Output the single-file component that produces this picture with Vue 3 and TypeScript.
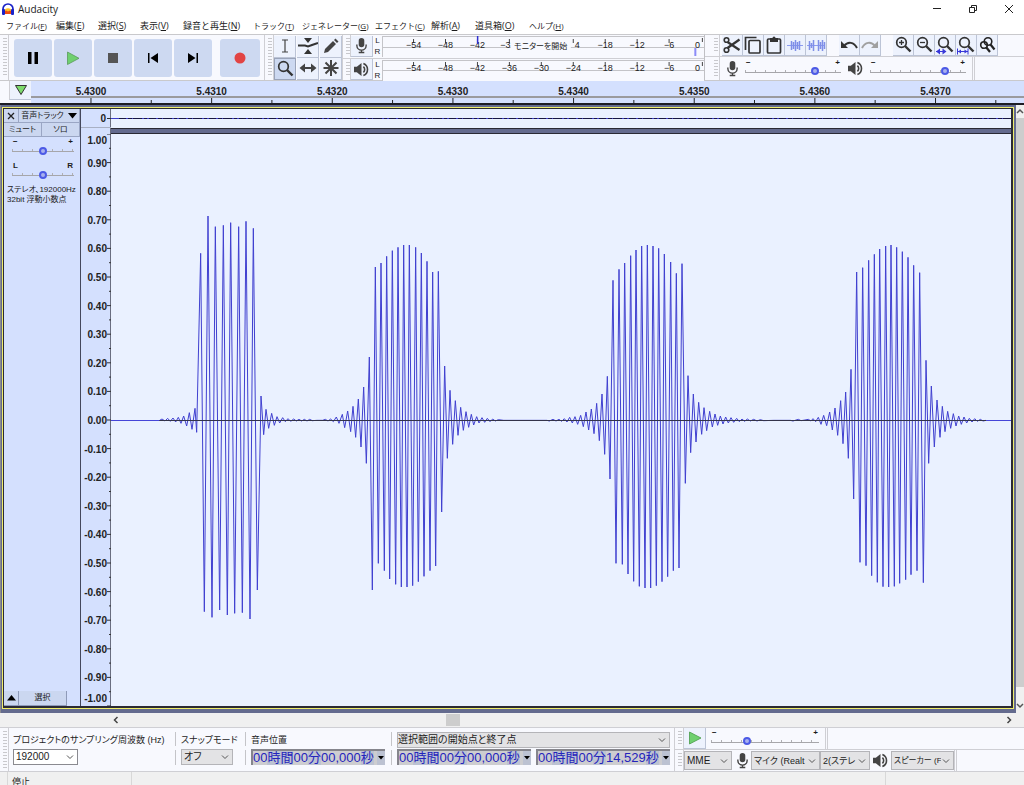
<script setup lang="ts">
import { ref } from 'vue'

interface MenuItem { label: string; key: string; kana?: boolean }
interface Burst { x: number; mid: number; peaks: number[] }

const menus: MenuItem[] = [
  { label: 'ファイル', key: 'F', kana: true },
  { label: '編集', key: 'E' },
  { label: '選択', key: 'S' },
  { label: '表示', key: 'V' },
  { label: '録音と再生', key: 'N' },
  { label: 'トラック', key: 'T', kana: true },
  { label: 'ジェネレーター', key: 'G', kana: true },
  { label: 'エフェクト', key: 'C', kana: true },
  { label: '解析', key: 'A' },
  { label: '道具箱', key: 'O' },
  { label: 'ヘルプ', key: 'H', kana: true },
]

const meterMarks = [-54, -48, -42, -36, -30, -24, -18, -12, -6].map((db, i) => ({
  text: '−' + Math.abs(db),
  at: 9.8 + i * 9.92,
}))
const recMarks = meterMarks.map((m, i) => ({
  at: m.at,
  text: i === 3 ? '−3' : i === 4 ? '' : i === 5 ? '4' : m.text,
  shift: i === 3 ? -4 : i === 5 ? 4 : 0,
}))

const timeMarks = Array.from({ length: 8 }, (_, i) => ({
  text: (5.43 + i * 0.001).toFixed(4),
  at: 6.04 + i * 12.15,
}))

const ampMarks = Array.from({ length: 21 }, (_, i) => {
  const v = (10 - i) / 10
  return { text: v.toFixed(2), at: i * 5, dy: i === 0 ? 10 : i === 20 ? -4 : 4 }
})

/* Turning points of each burst, as x, y pairs in thirds of a pixel. */
const bursts: Burst[] = [
  {
    x: 117, mid: 661,
    peaks: [28, 661, 35, 657, 44, 663, 52, 655, 60, 664, 68, 654, 76, 666, 84, 652, 92, 670, 100, 648, 109, 678, 117, 638, 125, 688, 134, 625, 139, 697, 151, 160, 162, 1235, 173, 48, 185, 1252, 195, 80, 208, 1230, 219, 76, 231, 1245, 241, 68, 253, 1240, 265, 80, 276, 1238, 287, 64, 299, 1257, 309, 85, 321, 1170, 332, 588, 340, 704, 347, 628, 355, 685, 364, 640, 372, 676, 380, 650, 388, 669, 397, 653, 405, 665, 413, 656, 421, 664, 430, 657, 438, 663, 446, 658, 454, 663, 462, 658, 470, 663, 478, 658, 486, 662, 500, 661, 517, 661, 525, 658, 533, 663, 541, 657, 549, 665, 558, 651, 566, 670],
  },
  {
    x: 627, mid: 571,
    peaks: [66, 553, 73, 593, 82, 543, 91, 605, 98, 529, 106, 622, 114, 507, 122, 651, 130, 471, 138, 700, 147, 381, 156, 1080, 165, 111, 174, 1000, 182, 99, 192, 1022, 199, 79, 208, 1047, 216, 62, 226, 1063, 233, 52, 243, 1071, 250, 45, 260, 1071, 267, 45, 277, 1067, 286, 52, 294, 1055, 303, 69, 311, 1039, 320, 94, 329, 1022, 337, 126, 346, 1008, 354, 124, 364, 846, 373, 408, 381, 685, 389, 481, 397, 643, 405, 512, 413, 616, 421, 532, 429, 601, 437, 545, 445, 592, 453, 553, 460, 585, 469, 560, 476, 579, 485, 563, 493, 577, 501, 565, 509, 575, 517, 567, 525, 573, 534, 569, 550, 571],
  },
  {
    x: 1287, mid: 571,
    peaks: [20, 571, 27, 573, 38, 568, 47, 573, 56, 568, 64, 574, 72, 566, 80, 576, 88, 562, 96, 579, 104, 560, 112, 583, 121, 556, 129, 590, 137, 546, 145, 600, 153, 537, 161, 611, 169, 520, 177, 632, 185, 492, 193, 673, 201, 439, 209, 747, 218, 151, 227, 1000, 236, 118, 246, 1003, 253, 99, 263, 1032, 271, 77, 280, 1054, 287, 60, 297, 1069, 304, 48, 314, 1074, 321, 45, 331, 1074, 338, 48, 348, 1067, 355, 55, 365, 1055, 372, 72, 382, 1040, 391, 96, 399, 1022, 408, 130, 416, 1014, 425, 101, 435, 760, 443, 437, 451, 668, 459, 492, 467, 636, 475, 517, 484, 613, 491, 533, 499, 602, 508, 544, 516, 591, 524, 552, 532, 586, 540, 558, 548, 582, 556, 561, 564, 579, 572, 563, 580, 577, 589, 565, 597, 575, 605, 567, 613, 574, 621, 567, 630, 573, 640, 568, 650, 573, 660, 569, 670, 572, 700, 571],
  },
  {
    x: 2037, mid: 571,
    peaks: [0, 571, 8, 573, 24, 568, 32, 572, 44, 570, 54, 568, 62, 573, 68, 566, 76, 575, 84, 562, 92, 583, 100, 556, 109, 587, 118, 546, 126, 600, 134, 534, 142, 616, 151, 512, 158, 641, 166, 486, 174, 685, 182, 418, 190, 807, 199, 126, 209, 997, 217, 113, 227, 1007, 235, 91, 244, 1037, 252, 73, 261, 1057, 268, 57, 278, 1070, 286, 48, 295, 1071, 302, 45, 312, 1069, 319, 52, 328, 1060, 336, 65, 346, 1049, 353, 82, 362, 1034, 370, 106, 380, 1022, 388, 128, 399, 1058, 407, 391, 415, 700, 423, 468, 432, 651, 440, 510, 449, 622, 456, 529, 464, 605, 472, 544, 481, 595, 489, 551, 497, 588, 505, 558, 513, 583, 521, 561, 529, 579, 537, 565, 545, 576, 553, 566, 561, 574, 570, 568, 578, 573, 587, 571],
  },
]

const wave = bursts
  .flatMap((b) => {
    const out: string[] = []
    for (let i = 0; i < b.peaks.length; i += 2) {
      out.push(`${b.peaks[i] + b.x + 1},${b.peaks[i + 1] - b.mid + 859}`)
    }
    return out
  })
  .join(' ')

const timeParts = (sec: string) => [
  { t: '00', unit: false }, { t: '時間', unit: true },
  { t: '00', unit: false }, { t: '分', unit: true },
  { t: sec, unit: false }, { t: '秒', unit: true },
]

const recLevel = ref(75)
const playLevel = ref(81)
const gain = ref(50)
const pan = ref(50)
const speed = ref(32)
</script>

<template>
  <div class="app">
    <svg class="defs" aria-hidden="true">
      <symbol id="mic" viewBox="0 0 14 18">
        <rect x="4" y="1" width="6" height="10" rx="3" fill="#444" />
        <path d="M2 8v1a5 5 0 0 0 10 0V8M7 14v3M4 16.500h6" fill="none" stroke="#444" stroke-width="1.500" />
      </symbol>
      <symbol id="speaker" viewBox="0 0 18 16">
        <path d="M1 5h3l5-4v14l-5-4H1z" fill="#444" />
        <path d="M11 5a4 4 0 0 1 0 6M11 1.500a7 7 0 0 1 0 13" fill="none" stroke="#444" stroke-width="1.700" />
      </symbol>
      <symbol id="chev" viewBox="0 0 8 8">
        <path d="M1 2.500l3 3 3-3" fill="none" stroke="#555" />
      </symbol>
      <symbol id="lens" viewBox="0 0 20 20">
        <circle cx="8.500" cy="7.500" r="4.800" fill="none" stroke="#333" stroke-width="1.700" />
        <path d="M12 11l5.500 5.500" stroke="#333" stroke-width="2.400" />
      </symbol>
    </svg>

    <header class="title">
      <svg width="14" height="14" viewBox="0 0 14 14">
        <path d="M3.500 8.500C4 5.500 10 5.500 10.500 8.500V12H3.500z" fill="#ffc020" />
        <path d="M3.500 9.500l1.500-1 2 1 2-1 1.500 1V12h-7z" fill="#f04a10" />
        <path d="M2 9V7a5 5 0 0 1 10 0v2" fill="none" stroke="#1a22c8" stroke-width="1.700" />
        <rect x="1" y="7" width="3" height="6" rx="1" fill="#1a22c8" />
        <rect x="10" y="7" width="3" height="6" rx="1" fill="#1a22c8" />
      </svg>
      <h1>Audacity</h1>
      <div class="winbtns">
        <button aria-label="最小化"><svg width="10" height="10" viewBox="0 0 10 10"><path d="M1 4.500h8" stroke="#222" /></svg></button>
        <button aria-label="元に戻す"><svg width="10" height="10" viewBox="0 0 10 10"><path d="M1.500 3.500h5v5h-5zM3.500 3.500v-2h5v5h-2" fill="none" stroke="#222" /></svg></button>
        <button aria-label="閉じる"><svg width="10" height="10" viewBox="0 0 10 10"><path d="M1 1l8 8M9 1l-8 8" stroke="#222" /></svg></button>
      </div>
    </header>

    <nav class="menu">
      <button v-for="m in menus" :key="m.key" :class="{ kana: m.kana }">{{ m.label }}(<u>{{ m.key }}</u>)</button>
    </nav>

    <section class="tools">
      <div class="transport">
        <i class="grip"></i>
        <div class="tbtns">
          <button aria-label="一時停止"><svg viewBox="0 0 38 38"><path d="M14 13h3.500v12H14zM20.500 13H24v12h-3.500z" fill="#000" /></svg></button>
          <button aria-label="再生"><svg viewBox="0 0 38 38"><path d="M13.500 13v12.500L25 19.300z" fill="#6fd06f" stroke="#5a9a5a" stroke-width=".8" /></svg></button>
          <button aria-label="停止"><svg viewBox="0 0 38 38"><path d="M14 14h10v10H14z" fill="#555" /></svg></button>
          <button aria-label="先頭へ"><svg viewBox="0 0 38 38"><path d="M14 14h1.500v10H14zM24 14v10l-7.500-5z" fill="#000" /></svg></button>
          <button aria-label="末尾へ"><svg viewBox="0 0 38 38"><path d="M22.500 14H24v10h-1.500zM14 14v10l7.500-5z" fill="#000" /></svg></button>
          <button class="rec" aria-label="録音"><svg viewBox="0 0 38 38"><circle cx="19" cy="19" r="5.500" fill="#e24444" /></svg></button>
        </div>
      </div>

      <div class="toolpick">
        <i class="grip"></i>
        <div class="pick">
          <button aria-label="選択ツール"><svg viewBox="0 0 20 20"><path d="M7 4h2.500l.5.500.5-.500H13M7 16h2.500l.5-.500.5.500H13M10 4.500v11" fill="none" stroke="#444" stroke-width="1.200" /></svg></button>
          <button aria-label="エンベロープ"><svg viewBox="0 0 20 20"><path d="M0 9.500h7l3 1 4-1.500 6-2" fill="none" stroke="#333" stroke-width="2" /><path d="M6 2h8l-4 5zM6 18h8l-4-5z" fill="#333" /></svg></button>
          <button aria-label="ドロー"><svg viewBox="0 0 20 20"><path d="M3 17l1-4 8-8 3 3-8 8zM13 4l1.500-1.500 3 3L16 7z" fill="#444" /></svg></button>
          <button class="on" aria-label="ズーム"><svg viewBox="0 0 20 20"><use href="#lens" /></svg></button>
          <button aria-label="タイムシフト"><svg viewBox="0 0 20 20"><path d="M4 10h12" stroke="#444" stroke-width="2" /><path d="M7 5.500L1.500 10 7 14.500zM13 5.500l5.500 4.500-5.500 4.500z" fill="#444" /></svg></button>
          <button aria-label="マルチツール"><svg viewBox="0 0 20 20"><path d="M10 2v16M2.500 10h15M4.500 4.500l11 11M15.500 4.500l-11 11" stroke="#444" stroke-width="2" /></svg></button>
        </div>
      </div>

      <div class="meters">
        <div class="meter">
          <i class="grip"></i>
          <button class="sq" aria-label="録音メーター"><svg class="mic"><use href="#mic" /></svg></button>
          <span class="lr"><b>L</b><b>R</b></span>
          <svg class="scale" height="22">
            <rect width="100%" height="22" fill="#f8f9fe" />
            <path d="M0 1.500h2000M0 12.500h2000M.5 1v21" stroke="#c4c4c8" fill="none" />
            <template v-for="m in recMarks" :key="m.at">
              <line :x1="m.at + '%'" :x2="m.at + '%'" y1="4" y2="8" stroke="#444" />
              <text :x="m.at + '%'" :dx="m.shift" y="13">{{ m.text }}</text>
            </template>
            <line x1="29.700%" x2="29.700%" y1="1" y2="9" stroke="#3030d0" stroke-width="1.500" />
            <rect x="40%" y="4" width="60" height="14" fill="#f8f9fe" />
            <text class="jp" x="49.300%" y="14">モニターを開始</text>
            <text x="98%" y="13">0</text>
            <line x1="99.500%" x2="99.500%" y1="3" y2="7" stroke="#444" />
            <rect x="97%" y="13" width="2" height="8" fill="#8c8cf8" />
          </svg>
        </div>
        <div class="meter">
          <i class="grip"></i>
          <button class="sq" aria-label="再生メーター"><svg class="spk"><use href="#speaker" /></svg></button>
          <span class="lr"><b>L</b><b>R</b></span>
          <svg class="scale" height="22">
            <rect width="100%" height="22" fill="#f8f9fe" />
            <path d="M0 1.500h2000M0 11.500h2000M.5 1v21" stroke="#c4c4c8" fill="none" />
            <template v-for="m in meterMarks" :key="m.at">
              <line :x1="m.at + '%'" :x2="m.at + '%'" y1="3" y2="7" stroke="#444" />
              <text :x="m.at + '%'" y="12">{{ m.text }}</text>
            </template>
            <text x="98%" y="12">0</text>
            <line x1="99.500%" x2="99.500%" y1="3" y2="7" stroke="#444" />
          </svg>
        </div>
      </div>

      <div class="right">
        <div class="editbar">
          <i class="grip"></i>
          <div class="group">
            <button aria-label="切り取り"><svg viewBox="0 0 20 20"><path d="M5.500 7l12 8M5.500 13l12-8.500" stroke="#333" stroke-width="2.200" /><circle cx="4.500" cy="5" r="2.300" fill="none" stroke="#333" stroke-width="1.600" /><circle cx="4.500" cy="15" r="2.300" fill="none" stroke="#333" stroke-width="1.600" /></svg></button>
            <button aria-label="コピー"><svg viewBox="0 0 20 20"><path d="M2.500 15V2.500h11" fill="none" stroke="#333" stroke-width="1.700" /><rect x="6" y="5.500" width="11" height="12.500" rx="1" fill="none" stroke="#333" stroke-width="1.700" /></svg></button>
            <button aria-label="貼り付け"><svg viewBox="0 0 20 20"><rect x="3.500" y="4" width="13" height="14" rx="1" fill="none" stroke="#333" stroke-width="1.700" /><path d="M6 3h2.500a1.500 1.500 0 0 1 3 0H14v4H6z" fill="#333" /></svg></button>
            <button aria-label="トリム"><svg viewBox="0 0 20 20"><path d="M2 10.500h16" stroke="#8c9cf0" /><path d="M6.500 6v9M8.500 7v7M10.500 5v11M12.500 7v7M14.500 6v9" stroke="#7f8fe8" stroke-width="1.500" /></svg></button>
            <button aria-label="無音化"><svg viewBox="0 0 20 20"><path d="M1 10.500h18" stroke="#8c9cf0" /><path d="M3.500 6v9M5.500 8v5M7.500 5v11M12.500 5v11M14.500 7v7M16.500 5v11M18.500 7v7" stroke="#7f8fe8" stroke-width="1.500" /></svg></button>
          </div>
          <div class="group">
            <button aria-label="元に戻す"><svg viewBox="0 0 20 20"><path d="M2 6v7h7z" fill="#333" /><path d="M5 11c4-5 10-4 13 2" fill="none" stroke="#333" stroke-width="2" /></svg></button>
            <button aria-label="やり直し"><svg viewBox="0 0 20 20"><path d="M18 6v7h-7z" fill="#a0a0a0" /><path d="M15 11c-4-5-10-4-13 2" fill="none" stroke="#a0a0a0" stroke-width="2" /></svg></button>
          </div>
          <div class="group">
            <button aria-label="拡大"><svg viewBox="0 0 20 20"><use href="#lens" /><path d="M6 7.500h5M8.500 5v5" stroke="#333" stroke-width="1.300" /></svg></button>
            <button aria-label="縮小"><svg viewBox="0 0 20 20"><use href="#lens" /><path d="M6 7.500h5" stroke="#333" stroke-width="1.300" /></svg></button>
            <button aria-label="選択範囲に合わせる"><svg viewBox="0 0 20 20"><use href="#lens" /><path d="M1 16.500h10" stroke="#3838d8" /><path d="M1 16.500l4-3v6zM11.500 16.500l-4-3v6z" fill="#3838d8" /></svg></button>
            <button aria-label="全体に合わせる"><svg viewBox="0 0 20 20"><use href="#lens" /><path d="M1.500 13.500v6M12 13.500v6M2 16.500h10" stroke="#3838d8" /><path d="M2 16.500l3-2v4zM11.500 16.500l-3-2v4z" fill="#3838d8" /></svg></button>
            <button aria-label="ズーム切り替え"><svg viewBox="0 0 20 20"><circle cx="7" cy="10" r="3.300" fill="none" stroke="#222" stroke-width="1.600" /><circle cx="11" cy="6.500" r="3.800" fill="none" stroke="#222" stroke-width="1.600" /><path d="M9 12l4 5M13.500 9.500l4 5" stroke="#222" stroke-width="2.200" /></svg></button>
          </div>
        </div>
        <div class="mixer">
          <i class="grip"></i>
          <svg class="mic"><use href="#mic" /></svg>
          <label class="slider w96"><span><b>−</b><b>+</b></span><input v-model="recLevel" type="range" aria-label="録音音量" /></label>
          <svg class="spk"><use href="#speaker" /></svg>
          <label class="slider w96"><span><b>−</b><b>+</b></span><input v-model="playLevel" type="range" aria-label="再生音量" /></label>
          <i class="endcap"></i>
        </div>
      </div>
    </section>

    <section class="timeline">
      <button class="pin" aria-label="ヘッドを固定"><svg width="14" height="12" viewBox="0 0 14 12"><path d="M1.500 1.500h11L7 10.500z" fill="#7ddb6c" stroke="#333" /></svg></button>
      <svg class="ruler">
        <rect y="15" width="100%" height="2" fill="#9a9a9e" />
        <template v-for="t in timeMarks" :key="t.at">
          <text :x="t.at + '%'" y="14">{{ t.text }}</text>
          <line :x1="t.at + '%'" :x2="t.at + '%'" y1="17" y2="22" stroke="#222" />
          <line :x1="t.at + 6.07 + '%'" :x2="t.at + 6.07 + '%'" y1="19" y2="22" stroke="#222" />
        </template>
      </svg>
    </section>

    <main class="stage">
      <div class="frame">
        <div class="track">
          <aside class="panel">
            <div class="prow">
              <button class="x" aria-label="トラックを閉じる"><svg width="8" height="8" viewBox="0 0 8 8"><path d="M1 1l6 6M7 1L1 7" stroke="#222" stroke-width="1.300" /></svg></button>
              <button class="name">音声トラック<svg width="9" height="6" viewBox="0 0 9 6"><path d="M0 0h9L4.500 5.500z" fill="#000" /></svg></button>
            </div>
            <div class="prow half"><button>ミュート</button><button>ソロ</button></div>
            <label class="slider"><span><b>−</b><b>+</b></span><input v-model="gain" type="range" aria-label="ゲイン" /></label>
            <label class="slider"><span><b>L</b><b>R</b></span><input v-model="pan" type="range" aria-label="パン" /></label>
            <p>ステレオ、192000Hz<br />32bit 浮動小数点</p>
            <div class="pfoot">
              <button aria-label="折りたたむ"><svg width="9" height="6" viewBox="0 0 9 6"><path d="M0 5.500h9L4.500 0z" fill="#000" /></svg></button>
              <button class="sel">選択</button>
            </div>
          </aside>

          <div class="vruler">
            <svg class="vtop"><text x="25" y="13">0</text><path d="M26 9.500h4" stroke="#333" /></svg>
            <svg class="vmain">
              <template v-for="a in ampMarks" :key="a.at">
                <text x="26" :y="a.at + '%'" :dy="a.dy">{{ a.text }}</text>
                <line x1="26" x2="30" :y1="a.at + '%'" :y2="a.at + '%'" stroke="#333" />
                <line x1="28" x2="30" :y1="a.at + 2.5 + '%'" :y2="a.at + 2.5 + '%'" stroke="#333" />
              </template>
            </svg>
          </div>

          <div class="waves">
            <svg class="wtop">
              <line x1="0" x2="100%" y1="9.500" y2="9.500" stroke="#3c3cc8" />
              <line x1="8" x2="100%" y1="9.500" y2="9.500" stroke="#181840" stroke-dasharray="7 2 4 1 9 2 3 2" />
            </svg>
            <div class="bar"></div>
            <svg class="wmain" viewBox="0 0 2700 1716" preserveAspectRatio="none">
              <polyline :points="wave" class="sig" />
              <line x1="0" x2="2700" y1="859.500" y2="859.500" stroke="#4646d8" class="ln" />
              <line x1="145" x2="2625" y1="859.500" y2="859.500" stroke="#33334a" class="ln" />
            </svg>
          </div>
        </div>
      </div>
      <div class="vscroll">
        <svg width="8" height="12" viewBox="0 0 8 12"><path d="M1 8l3-3 3 3" fill="none" stroke="#555" stroke-width="1.500" /></svg>
        <i></i>
        <svg width="8" height="12" viewBox="0 0 8 12"><path d="M1 3l3 3 3-3" fill="none" stroke="#555" stroke-width="1.500" /></svg>
      </div>
    </main>

    <div class="hscroll">
      <svg width="8" height="8" viewBox="0 0 8 8"><path d="M5.500 1l-3 3 3 3" fill="none" stroke="#444" stroke-width="1.500" /></svg>
      <div class="htrack"><i></i></div>
      <svg width="8" height="8" viewBox="0 0 8 8"><path d="M2.500 1l3 3-3 3" fill="none" stroke="#444" stroke-width="1.500" /></svg>
    </div>

    <section class="dock">
      <div class="selbar">
        <i class="grip"></i>
        <div class="cell rate">
          <label for="rate">プロジェクトのサンプリング周波数 (Hz)</label>
          <span class="dd white"><select id="rate"><option>192000</option></select><svg><use href="#chev" /></svg></span>
        </div>
        <i class="split"></i>
        <div class="cell snap">
          <label for="snap">スナップモード</label>
          <span class="dd"><select id="snap"><option>オフ</option></select><svg><use href="#chev" /></svg></span>
        </div>
        <i class="split"></i>
        <div class="cell pos">
          <span class="cap">音声位置</span>
          <div class="time"><span v-for="(p, i) in timeParts('00,000')" :key="i" :class="{ unit: p.unit }">{{ p.t }}</span><button aria-label="書式"><svg width="6" height="4" viewBox="0 0 6 4"><path d="M0 0h6L3 3.500z" fill="#000" /></svg></button></div>
        </div>
        <i class="split"></i>
        <div class="cell range">
          <span class="dd"><select aria-label="選択範囲の種類"><option>選択範囲の開始点と終了点</option></select><svg><use href="#chev" /></svg></span>
          <div class="pair">
            <div class="time"><span v-for="(p, i) in timeParts('00,000')" :key="i" :class="{ unit: p.unit }">{{ p.t }}</span><button aria-label="書式"><svg width="6" height="4" viewBox="0 0 6 4"><path d="M0 0h6L3 3.500z" fill="#000" /></svg></button></div>
            <div class="time"><span v-for="(p, i) in timeParts('14,529')" :key="i" :class="{ unit: p.unit }">{{ p.t }}</span><button aria-label="書式"><svg width="6" height="4" viewBox="0 0 6 4"><path d="M0 0h6L3 3.500z" fill="#000" /></svg></button></div>
          </div>
        </div>
      </div>
      <div class="devs">
        <div class="speedrow">
          <i class="grip"></i>
          <button class="sq" aria-label="指定速度で再生"><svg width="14" height="14" viewBox="0 0 14 14"><path d="M1.500 1v12L13 7z" fill="#6fd06f" stroke="#4a9a4a" stroke-width=".8" /></svg></button>
          <label class="slider w108"><span><b>−</b><b>+</b></span><input v-model="speed" type="range" aria-label="再生速度" /></label>
          <i class="endcap"></i>
        </div>
        <div class="devrow">
          <i class="grip"></i>
          <span class="dd d48"><select aria-label="オーディオホスト"><option>MME</option></select><svg><use href="#chev" /></svg></span>
          <svg class="mic"><use href="#mic" /></svg>
          <span class="dd kana d68"><select aria-label="録音デバイス"><option>マイク (Realt</option></select><svg><use href="#chev" /></svg></span>
          <span class="dd kana d50"><select aria-label="録音チャンネル"><option>2(ステレ</option></select><svg><use href="#chev" /></svg></span>
          <svg class="spk"><use href="#speaker" /></svg>
          <span class="dd kana d62"><select aria-label="再生デバイス"><option>スピーカー (F</option></select><svg><use href="#chev" /></svg></span>
          <i class="endcap"></i>
        </div>
      </div>
    </section>

    <footer class="status"><span class="s0"></span><span class="s1">停止</span><span class="s2"></span><span class="s3"></span></footer>
  </div>
</template>

<style>
html, body { margin: 0; overflow: hidden; }
</style>

<style scoped>
.app {
  height: 100vh;
  display: flex;
  flex-direction: column;
  background: #fff;
  color: #1c1c1c;
  font: 10px/12px "Liberation Sans", "Noto Sans CJK JP", sans-serif;
  font-feature-settings: "palt";
  overflow: hidden;
}
.app *, .app *::before { box-sizing: border-box; }
.defs { display: none; }
button, select {
  font: inherit;
  font-feature-settings: inherit;
  color: inherit;
  margin: 0;
  padding: 0;
  border: 0;
  background: none;
  border-radius: 0;
}
svg { display: block; flex: none; }
b { font-weight: normal; }

.title { height: 18px; flex: none; display: flex; align-items: center; gap: 3px; padding-left: 1px; }
.title h1 { margin: 0; font: 10px/14px "Open Sans", sans-serif; }
.winbtns { margin-left: auto; display: flex; gap: 14px; padding-right: 10px; }
.winbtns button { width: 22px; height: 16px; display: grid; place-items: center; }
.winbtns button:last-child { width: 10px; margin-left: 6px; }

.menu {
  height: 16px;
  flex: none;
  display: grid;
  grid-template-columns: 50px 42px 42px 43px 70px 49px 73px 56px 44px 54px auto;
  padding-left: 6px;
  font: 9px/16px "Open Sans", "Noto Sans CJK JP", sans-serif;
}
.menu button { text-align: left; white-space: nowrap; }
.menu button.kana { font-size: 8px; }

.tools {
  flex: none;
  height: 47px;
  display: flex;
  background: #f8f9fe;
  border-top: 1px solid #c9c9cc;
  border-bottom: 1px solid #c9c9cc;
}
.grip {
  flex: none;
  width: 9px;
  align-self: stretch;
  border-right: 1px solid #cfcfd4;
  background: repeating-linear-gradient(#c8c8cc 0 1px, transparent 1px 3px) 3px 3px / 4px calc(100% - 6px) no-repeat;
}
.transport, .toolpick, .meter, .editbar, .mixer { display: flex; align-items: center; }
.tbtns { display: flex; gap: 2px; padding: 0 4px 0 5px; }
.tbtns button { width: 38px; height: 38px; border-radius: 3px; background: #cdd9f1; }
.tbtns button.rec { margin-left: 6px; width: 40px; display: grid; place-items: center; }
.tbtns svg { width: 38px; height: 38px; }

.toolpick { border-left: 1px solid #cfcfd4; }
.pick { display: grid; grid-template-columns: repeat(3, 22px); column-gap: 1px; grid-auto-rows: 22px; }
.pick button, .group button, .sq {
  background: #edf2fd;
  border-right: 1px solid #bcc4d6;
  border-bottom: 1px solid #bcc4d6;
  display: grid;
  place-items: center;
}
.pick svg { width: 20px; height: 20px; }
.pick button.on { background: #cdd9f1; border: 1px solid #9aa4ba; }

.meters { flex: 1 1 0; display: grid; grid-template-rows: 23px 22px; border-left: 1px solid #cfcfd4; }
.meters .grip { width: 8px; }
.meter { height: 22px; }
.meter + .meter { border-top: 1px solid #cfcfd4; }
.sq { width: 22px; height: 21px; }
.lr { width: 9px; display: grid; grid-template-rows: 11px 11px; font-size: 8px; line-height: 11px; text-align: center; }
.scale { flex: 1; width: 0; overflow: hidden; }
.scale text { font-size: 9px; text-anchor: middle; fill: #222; }
.scale .jp { font-size: 8px; }
.mic { width: 13px; height: 17px; }
.spk { width: 17px; height: 15px; }

.right { width: 320px; flex: none; display: grid; grid-template-rows: 22px 23px; border-left: 1px solid #c0c0c4; }
.editbar, .mixer { padding-left: 6px; }
.editbar { gap: 2px; border-bottom: 1px solid #cfcfd4; }
.group { display: flex; margin-right: 10px; }
.group button { width: 21px; height: 21px; }
.group svg { width: 20px; height: 20px; }
.mixer { gap: 6px; }
.endcap { width: 3px; align-self: stretch; border: solid #cfcfd4; border-width: 0 1px; }

.slider { display: block; height: 20px; }
.slider > span { display: flex; justify-content: space-between; font-size: 8px; line-height: 8px; height: 8px; padding: 0 1px; }
.slider b { font-weight: bold; }
.slider input {
  appearance: none;
  display: block;
  width: 100%;
  height: 9px;
  margin: 0;
  background:
    linear-gradient(#a6a6aa, #a6a6aa) 0 5px / 100% 1px no-repeat,
    repeating-linear-gradient(90deg, #b0b0b4 0 1px, transparent 1px 10px) 0 3px / 100% 2px no-repeat;
}
.slider input::-webkit-slider-thumb {
  appearance: none;
  width: 8px;
  height: 8px;
  border-radius: 50%;
  border: 2px solid #4c5ae6;
  background: #a8b0ee;
}
.w96 { width: 96px; }
.w108 { width: 108px; }

.timeline { flex: none; height: 24px; display: flex; background: #f8f9fe; border-bottom: 2px solid #1c1c24; }
.pin { width: 22px; margin-left: 9px; height: 19px; border-left: 1px solid #cfcfd4; border-bottom: 1px solid #bcc4d6; background: #edf2fd; display: grid; place-items: center; }
.ruler { flex: 1; width: 0; height: 22px; background: #d4e0fe; }
.ruler text, .vruler text { font-size: 10px; font-weight: bold; fill: #222; }
.ruler text { text-anchor: middle; }

.stage { flex: 1; min-height: 0; display: flex; }
.frame {
  flex: 1;
  min-width: 0;
  padding: 2px 2px 4px 1px;
  background: #646b8e;
  border-left: 1px solid #8c8c90;
  display: flex;
}
.track {
  flex: 1;
  min-width: 0;
  border: 1px solid #f0ee6c;
  display: grid;
  grid-template-columns: 77px 30px minmax(0, 1fr);
  padding: 1px 2px 2px 1px;
  background: #2a2a34;
}
.panel {
  background: #d4e0fe;
  border-right: 1px solid #44485c;
  display: flex;
  flex-direction: column;
  min-height: 0;
  overflow: hidden;
}
.prow { display: flex; }
.prow button {
  height: 14px;
  background: #cbd7f0;
  border: solid #9aa6c4;
  border-width: 0 1px 1px 0;
  font-size: 8px;
  line-height: 13px;
  white-space: nowrap;
  display: flex;
  align-items: center;
  justify-content: center;
}
.prow .x { width: 15px; }
.prow .name { flex: 1; gap: 4px; }
.half button { flex: 1; }
.panel .slider { width: 62px; margin: 1px 0 3px 8px; }
.panel p { margin: 0 0 0 3px; font-size: 8px; line-height: 10px; white-space: nowrap; }
.pfoot { margin-top: auto; display: flex; }
.pfoot button {
  width: 15px;
  height: 15px;
  background: #cbd7f0;
  border: solid #8e9ab8;
  border-width: 0 1px 1px 0;
  display: grid;
  place-items: center;
  font-size: 8px;
}
.pfoot .sel { width: 48px; }

.vruler { background: #d4e0fe; border-right: 1px solid #6a6e80; display: grid; grid-template-rows: 19px minmax(0, 1fr); row-gap: 6px; }
.vruler svg { width: 30px; height: 100%; }
.vtop { border-bottom: 1px solid #a8b0c4; }
.vruler text { text-anchor: end; }

.waves { display: grid; grid-template-rows: 19px 6px minmax(0, 1fr); min-width: 0; }
.wtop, .wmain { width: 100%; height: 100%; background: #eaf1ff; }
.bar { background: #646b8e; border: solid #2a2a34; border-width: 1px 0; }
.sig { fill: none; stroke: #4040d0; stroke-width: 1; stroke-linejoin: bevel; vector-effect: non-scaling-stroke; }
.ln { stroke-width: 1; vector-effect: non-scaling-stroke; }

.vscroll { width: 8px; flex: none; background: #f0f0f0; display: flex; flex-direction: column; }
.vscroll i { flex: 1; margin: 1px 0 14px; background: #cdcdcd; }

.hscroll { flex: none; height: 14px; background: #f0f0f0; display: flex; align-items: center; padding: 0 11px 0 112px; }
.htrack { flex: 1; align-self: stretch; display: grid; grid-template-columns: 326px 14px; padding: 1px 0; }
.htrack i { grid-column: 2; background: #cdcdcd; }

.dock { flex: none; height: 45px; display: flex; background: #f8f9fe; border: solid #cfcfd4; border-width: 1px 0; }
.selbar { display: flex; border-right: 1px solid #cfcfd4; padding-right: 4px; }
.cell { display: grid; grid-template-rows: 16px 16px; row-gap: 1px; align-content: start; padding-top: 4px; white-space: nowrap; }
.cell label, .cap { font-size: 9px; line-height: 16px; }
.rate { width: 162px; margin-left: 4px; }
.rate .dd { width: 65px; }
.snap { width: 64px; }
.snap .dd { width: 52px; }
.pos { width: 140px; }
.pos .time { width: 134px; }
.range { width: 273px; }
.split {
  width: 1px;
  margin: 4px 5px 0 0;
  height: 33px;
  background: linear-gradient(#c4c4c8 0 14px, transparent 14px 18px, #c4c4c8 18px);
}
.dd { display: grid; grid-template-columns: minmax(0, 1fr) 14px; align-items: center; border: 1px solid #b4b4b8; background: #e3e3e5; height: 16px; }
.dd.white { background: #fff; border-color: #8a8a90; }
.dd select { appearance: none; grid-area: 1 / 1 / 2 / 3; width: 100%; padding: 0 12px 0 2px; outline: 0; overflow: hidden; white-space: nowrap; }
.dd svg { grid-area: 1 / 2; width: 8px; height: 8px; justify-self: center; pointer-events: none; }
.range .dd select { padding-left: 0; }
.pair { display: grid; grid-template-columns: 1fr 1fr; column-gap: 5px; }
.time {
  height: 16px;
  display: flex;
  align-items: stretch;
  border: solid #85858c;
  border-width: 2px 0 0 2px;
  background: #cdcdd0;
  color: #2424bc;
  font-size: 13px;
  line-height: 14px;
  font-feature-settings: normal;
  overflow: hidden;
}
.time .unit { background: #bcc2d2; }
.time button { margin-left: auto; width: 8px; background: #bcc2d2; display: grid; place-items: center; }

.devs { flex: 1; display: grid; grid-template-rows: 22px 21px; }
.speedrow, .devrow { display: flex; align-items: center; }
.speedrow { border-bottom: 1px solid #cfcfd4; }
.speedrow .slider { margin: 0 6px 0 5px; }
.devrow .dd { height: 19px; }
.devrow .kana { font-size: 9px; }
.devrow .mic { margin: 0 2px 0 4px; }
.devrow .spk { margin: 0 2px; }
.d48 { width: 48px; }
.d68 { width: 69px; }
.d50 { width: 50px; }
.d62 { width: 63px; }
.devrow .d62 { font-size: 8px; }

.status {
  flex: none;
  height: 13px;
  background: #f0f0f0;
  display: grid;
  grid-template-columns: 8px 124px minmax(0, 1fr) 138px;
  overflow: hidden;
}
.status span { border-right: 1px solid #d8d8d8; }
.status .s1 { padding: 4px 0 0 4px; font-size: 9px; }
.status .s3 { border: 0; }
</style>
